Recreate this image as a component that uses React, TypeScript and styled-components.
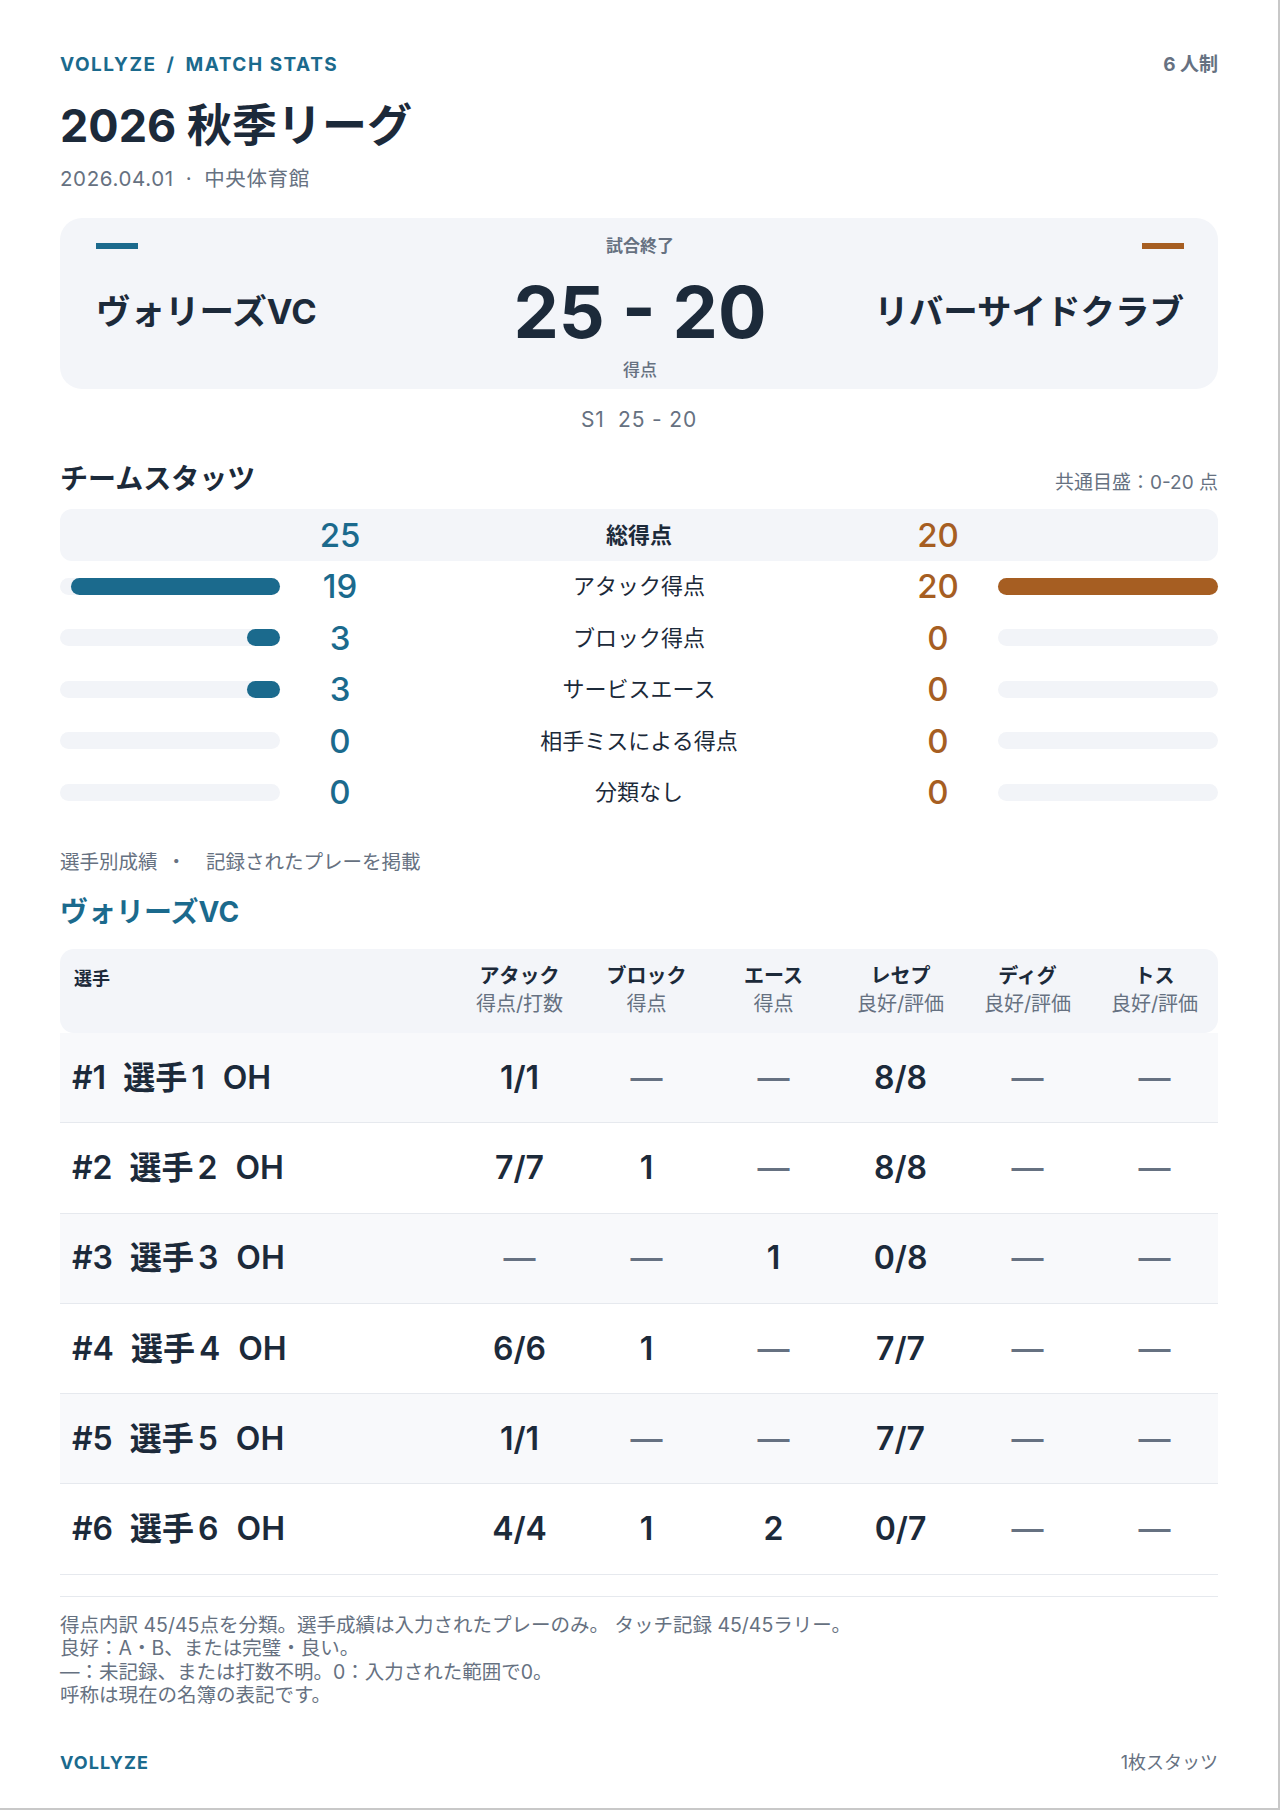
import React from 'react';
import styled, { createGlobalStyle } from 'styled-components';

const BLUE = '#1b6a8d';
const ORANGE = '#a65e22';
const INK = '#1c2a3a';
const MUTED = '#667181';
const SOFT = '#f3f5f9';
const TRACK = '#f2f4f8';
const STRIPE = '#f8f9fb';
const LINE = '#e6e9ee';

const Global = createGlobalStyle`
  html, body { margin: 0; padding: 0; background: #ffffff; }
  body {
    font-family: Inter, "Noto Sans CJK JP", sans-serif;
    color: ${INK};
    -webkit-font-smoothing: antialiased;
  }
  * { box-sizing: border-box; }
`;

const Page = styled.main`
  width: 1280px;
  height: 1810px;
  padding: 52px 60px 0 60px;
  border-right: 2px solid #c8c8c8;
  border-bottom: 2px solid #c8c8c8;
  display: flex;
  flex-direction: column;
`;

const TopBar = styled.header`
  display: flex;
  justify-content: space-between;
  align-items: center;
  height: 26px;
`;

const Brand = styled.div`
  font-size: 19px;
  line-height: 26px;
  font-weight: 700;
  letter-spacing: 0.08em;
  color: ${BLUE};
`;

const Slash = styled.span`
  margin: 0 10px;
`;

const Format = styled.div`
  font-size: 19px;
  line-height: 26px;
  font-weight: 700;
  color: ${MUTED};
`;

const Title = styled.h1`
  margin: 24px 0 0;
  font-size: 45px;
  line-height: 48px;
  font-weight: 700;
  color: ${INK};
`;

const Meta = styled.div`
  margin-top: 16px;
  font-size: 20.5px;
  line-height: 26px;
  color: ${MUTED};
  letter-spacing: 0.03em;
`;

const Dot = styled.span`
  margin: 0 12px;
`;

const ScoreCard = styled.section`
  margin-top: 26px;
  height: 171px;
  border-radius: 22px;
  background: ${SOFT};
  padding: 17px 34px 8px 36px;
  display: grid;
  grid-template-columns: 1fr auto 1fr;
  grid-template-rows: 22px 1fr 22px;
`;

const TeamBar = styled.div<{ $color: string; $end?: boolean }>`
  width: 42px;
  height: 6px;
  background: ${(p) => p.$color};
  align-self: center;
  justify-self: ${(p) => (p.$end ? 'end' : 'start')};
`;

const Status = styled.div`
  grid-column: 2;
  justify-self: center;
  font-size: 17px;
  line-height: 22px;
  font-weight: 700;
  color: ${MUTED};
`;

const TeamName = styled.div<{ $end?: boolean }>`
  align-self: center;
  justify-self: ${(p) => (p.$end ? 'end' : 'start')};
  margin-top: 8px;
  font-size: 34.5px;
  line-height: 40px;
  font-weight: 700;
  color: ${INK};
`;

const BigScore = styled.div`
  align-self: center;
  justify-self: center;
  margin-top: 8px;
  font-size: 72px;
  line-height: 76px;
  font-weight: 700;
  color: ${INK};
  white-space: pre;
`;

const ScoreLabel = styled.div`
  grid-column: 2;
  grid-row: 3;
  justify-self: center;
  font-size: 17px;
  line-height: 22px;
  font-weight: 500;
  color: ${MUTED};
`;

const SetLine = styled.div`
  margin-top: 18px;
  text-align: center;
  font-size: 21px;
  line-height: 26px;
  color: ${MUTED};
  letter-spacing: 0.04em;
  white-space: pre;
`;

const SectionHead = styled.div`
  margin-top: 28px;
  height: 36px;
  display: flex;
  justify-content: space-between;
  align-items: baseline;
`;

const SectionTitle = styled.h2`
  margin: 0;
  font-size: 28px;
  line-height: 36px;
  font-weight: 700;
  color: ${INK};
`;

const ScaleNote = styled.div`
  font-size: 19px;
  line-height: 26px;
  color: ${MUTED};
`;

const StatsList = styled.div`
  margin-top: 12px;
  display: flex;
  flex-direction: column;
`;

const StatRow = styled.div<{ $total?: boolean }>`
  display: grid;
  grid-template-columns: 220px 120px 1fr 120px 220px;
  align-items: center;
  height: 51.5px;
  border-radius: 12px;
  background: ${(p) => (p.$total ? SOFT : 'transparent')};
`;

const Track = styled.div<{ $side: 'left' | 'right' }>`
  height: 17px;
  border-radius: 9px;
  background: ${TRACK};
  display: flex;
  justify-content: ${(p) => (p.$side === 'left' ? 'flex-end' : 'flex-start')};
`;

const Fill = styled.div<{ $color: string }>`
  height: 100%;
  border-radius: 9px;
  background: ${(p) => p.$color};
`;

const StatNum = styled.div<{ $color: string }>`
  text-align: center;
  font-size: 33px;
  line-height: 38px;
  font-weight: 500;
  color: ${(p) => p.$color};
`;

const StatLabel = styled.div<{ $total?: boolean }>`
  text-align: center;
  font-size: 22px;
  line-height: 28px;
  font-weight: ${(p) => (p.$total ? 700 : 400)};
  color: ${INK};
`;

const Caption = styled.div`
  margin-top: 31px;
  font-size: 19.5px;
  line-height: 26px;
  color: ${MUTED};
  white-space: pre;
`;

const Sep = styled.span`
  margin: 0 20px 0 9px;
`;

const TeamTitle = styled.h3`
  margin: 19px 0 0;
  font-size: 28px;
  line-height: 36px;
  font-weight: 700;
  color: ${BLUE};
`;

const Table = styled.div`
  margin-top: 19px;
  display: flex;
  flex-direction: column;
`;

const COLS = '1fr repeat(6, 127px)';

const HeadRow = styled.div`
  display: grid;
  grid-template-columns: ${COLS};
  height: 84px;
  padding-top: 14px;
  border-radius: 14px;
  background: ${SOFT};
`;

const HeadFirst = styled.div`
  padding: 3px 0 0 14px;
  font-size: 18px;
  line-height: 26px;
  font-weight: 700;
  color: ${INK};
`;

const HeadCell = styled.div`
  display: flex;
  flex-direction: column;
  align-items: center;
`;

const HeadLabel = styled.div`
  font-size: 20px;
  line-height: 26px;
  font-weight: 700;
  color: ${INK};
`;

const HeadSub = styled.div`
  margin-top: 2px;
  font-size: 20px;
  line-height: 26px;
  color: ${MUTED};
`;

const BodyRow = styled.div<{ $striped?: boolean }>`
  display: grid;
  grid-template-columns: ${COLS};
  align-items: center;
  height: 90.3px;
  border-bottom: 1px solid ${LINE};
  background: ${(p) => (p.$striped ? STRIPE : '#ffffff')};
`;

const PlayerCell = styled.div`
  padding-left: 12px;
  display: flex;
  font-size: 32px;
  line-height: 40px;
  font-weight: 600;
  color: ${INK};
`;

const PlayerNo = styled.span`
  margin-right: 17px;
`;

const PlayerName = styled.span`
  margin-right: 18px;
`;

const NameNum = styled.span`
  margin-left: 4px;
`;

const ValueCell = styled.div<{ $empty?: boolean }>`
  text-align: center;
  font-size: 32px;
  line-height: 40px;
  font-weight: ${(p) => (p.$empty ? 500 : 600)};
  color: ${(p) => (p.$empty ? MUTED : INK)};
`;

const Notes = styled.div`
  margin-top: 21px;
  border-top: 1px solid ${LINE};
  padding-top: 17px;
  font-size: 19.5px;
  line-height: 23.5px;
  color: ${MUTED};
`;

const NoteLine = styled.div`
  white-space: pre;
`;

const Footer = styled.footer`
  margin-top: 43px;
  display: flex;
  justify-content: space-between;
  align-items: center;
  height: 24px;
`;

const FooterBrand = styled.div`
  font-size: 18px;
  line-height: 24px;
  font-weight: 700;
  letter-spacing: 0.06em;
  color: ${BLUE};
`;

const FooterNote = styled.div`
  font-size: 18px;
  line-height: 24px;
  color: ${MUTED};
`;

const MAX = 20;

type Stat = { label: string; home: number; away: number; total?: boolean };

const stats: Stat[] = [
  { label: '総得点', home: 25, away: 20, total: true },
  { label: 'アタック得点', home: 19, away: 20 },
  { label: 'ブロック得点', home: 3, away: 0 },
  { label: 'サービスエース', home: 3, away: 0 },
  { label: '相手ミスによる得点', home: 0, away: 0 },
  { label: '分類なし', home: 0, away: 0 },
];

const columns = [
  { label: 'アタック', sub: '得点/打数' },
  { label: 'ブロック', sub: '得点' },
  { label: 'エース', sub: '得点' },
  { label: 'レセプ', sub: '良好/評価' },
  { label: 'ディグ', sub: '良好/評価' },
  { label: 'トス', sub: '良好/評価' },
];

const players: { no: number; values: string[] }[] = [
  { no: 1, values: ['1/1', '', '', '8/8', '', ''] },
  { no: 2, values: ['7/7', '1', '', '8/8', '', ''] },
  { no: 3, values: ['', '', '1', '0/8', '', ''] },
  { no: 4, values: ['6/6', '1', '', '7/7', '', ''] },
  { no: 5, values: ['1/1', '', '', '7/7', '', ''] },
  { no: 6, values: ['4/4', '1', '2', '0/7', '', ''] },
];

const Bar: React.FC<{ value: number; side: 'left' | 'right'; color: string }> = ({ value, side, color }) => (
  <Track $side={side}>
    {value > 0 && <Fill $color={color} style={{ width: `${(Math.min(value, MAX) / MAX) * 100}%` }} />}
  </Track>
);

export default function App() {
  return (
    <>
      <Global />
      <Page>
        <TopBar>
          <Brand>
            VOLLYZE<Slash>/</Slash>MATCH STATS
          </Brand>
          <Format>6 人制</Format>
        </TopBar>
        <Title>2026 秋季リーグ</Title>
        <Meta>
          2026.04.01<Dot>·</Dot>中央体育館
        </Meta>

        <ScoreCard>
          <TeamBar $color={BLUE} />
          <Status>試合終了</Status>
          <TeamBar $color={ORANGE} $end />
          <TeamName>ヴォリーズVC</TeamName>
          <BigScore>25 - 20</BigScore>
          <TeamName $end>リバーサイドクラブ</TeamName>
          <ScoreLabel>得点</ScoreLabel>
        </ScoreCard>

        <SetLine>S1  25 - 20</SetLine>

        <SectionHead>
          <SectionTitle>チームスタッツ</SectionTitle>
          <ScaleNote>共通目盛：0-20 点</ScaleNote>
        </SectionHead>

        <StatsList>
          {stats.map((s) => (
            <StatRow key={s.label} $total={s.total}>
              {s.total ? <div /> : <Bar value={s.home} side="left" color={BLUE} />}
              <StatNum $color={BLUE}>{s.home}</StatNum>
              <StatLabel $total={s.total}>{s.label}</StatLabel>
              <StatNum $color={ORANGE}>{s.away}</StatNum>
              {s.total ? <div /> : <Bar value={s.away} side="right" color={ORANGE} />}
            </StatRow>
          ))}
        </StatsList>

        <Caption>
          選手別成績<Sep>・</Sep>記録されたプレーを掲載
        </Caption>
        <TeamTitle>ヴォリーズVC</TeamTitle>

        <Table>
          <HeadRow>
            <HeadFirst>選手</HeadFirst>
            {columns.map((c) => (
              <HeadCell key={c.label}>
                <HeadLabel>{c.label}</HeadLabel>
                <HeadSub>{c.sub}</HeadSub>
              </HeadCell>
            ))}
          </HeadRow>
          {players.map((p, i) => (
            <BodyRow key={p.no} $striped={i % 2 === 0}>
              <PlayerCell>
                <PlayerNo>#{p.no}</PlayerNo>
                <PlayerName>
                  選手<NameNum>{p.no}</NameNum>
                </PlayerName>
                <span>OH</span>
              </PlayerCell>
              {p.values.map((v, j) => (
                <ValueCell key={j} $empty={v === ''}>
                  {v === '' ? '—' : v}
                </ValueCell>
              ))}
            </BodyRow>
          ))}
        </Table>

        <Notes>
          <NoteLine>得点内訳 45/45点を分類。選手成績は入力されたプレーのみ。 タッチ記録 45/45ラリー。</NoteLine>
          <NoteLine>良好：A・B、または完璧・良い。</NoteLine>
          <NoteLine>—：未記録、または打数不明。0：入力された範囲で0。</NoteLine>
          <NoteLine>呼称は現在の名簿の表記です。</NoteLine>
        </Notes>

        <Footer>
          <FooterBrand>VOLLYZE</FooterBrand>
          <FooterNote>1枚スタッツ</FooterNote>
        </Footer>
      </Page>
    </>
  );
}
